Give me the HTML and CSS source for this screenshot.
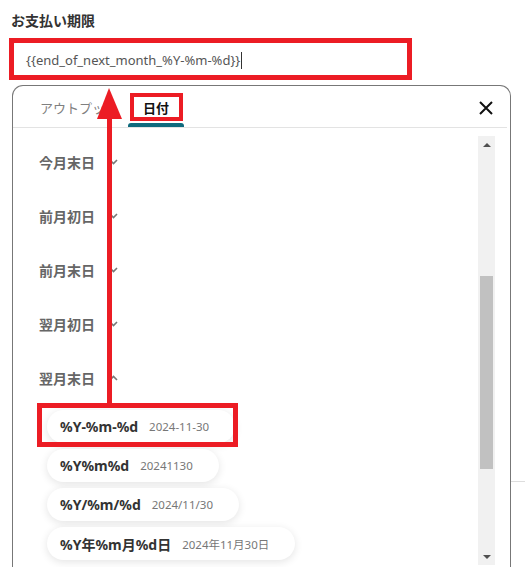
FILE: index.html
```html
<!DOCTYPE html>
<html lang="ja">
  <head>
    <meta charset="UTF-8" />
    <meta name="viewport" content="width=device-width, initial-scale=1.0" />
    <title>お支払い期限</title>
    <link rel="stylesheet" href="styles.css">
  </head>
  <body>
    <div class="field-label">お支払い期限</div>
    <div class="field-input">{{end_of_next_month_%Y-%m-%d}}<span class="caret"></span></div>

    <div class="main">
      <div class="panel">
        <div class="tabs">
          <div class="tab">アウトプット</div>
          <div class="tab active">日付</div>
          <svg class="close" width="14" height="14" viewBox="0 0 14 14">
            <path d="M1 1 L13 13 M13 1 L1 13" stroke="#111" stroke-width="2" fill="none" />
          </svg>
        </div>

        <div class="body">
          <div class="list">
            <div class="group">今月末日
              <svg class="chev" width="9" height="6" viewBox="0 0 9 6"><path d="M1 1 L4.5 4.5 L8 1" /></svg>
            </div>
            <div class="group">前月初日
              <svg class="chev" width="9" height="6" viewBox="0 0 9 6"><path d="M1 1 L4.5 4.5 L8 1" /></svg>
            </div>
            <div class="group">前月末日
              <svg class="chev" width="9" height="6" viewBox="0 0 9 6"><path d="M1 1 L4.5 4.5 L8 1" /></svg>
            </div>
            <div class="group">翌月初日
              <svg class="chev" width="9" height="6" viewBox="0 0 9 6"><path d="M1 1 L4.5 4.5 L8 1" /></svg>
            </div>
            <div class="group">翌月末日
              <svg class="chev" width="9" height="6" viewBox="0 0 9 6"><path d="M1 5 L4.5 1.5 L8 5" /></svg>
            </div>

            <div class="chips">
              <div class="chip"><b>%Y-%m-%d</b><span>2024-11-30</span></div>
              <div class="chip"><b>%Y%m%d</b><span>20241130</span></div>
              <div class="chip"><b>%Y/%m/%d</b><span>2024/11/30</span></div>
              <div class="chip"><b>%Y年%m月%d日</b><span>2024年11月30日</span></div>
            </div>
          </div>

          <div class="scrollbar">
            <div class="sb-btn"><i class="arrow-up"></i></div>
            <div class="sb-thumb"></div>
            <div class="sb-space"></div>
            <div class="sb-btn"><i class="arrow-down"></i></div>
          </div>
        </div>
      </div>
      <div class="aside"></div>
    </div>

    <!-- annotations -->
    <div class="mark mark-input"></div>
    <div class="mark mark-tab"></div>
    <div class="mark mark-chip"></div>
    <svg class="pointer" width="30" height="320" viewBox="0 0 30 320">
      <rect x="10" y="28" width="5" height="288" fill="#ec1c24" />
      <polygon points="12,0 0,31 25,31" fill="#ec1c24" />
    </svg>
  </body>
</html>
```

FILE: styles.css
```css
body {
  margin: 0;
  width: 525px;
  height: 567px;
  overflow: hidden;
  background: #fff;
  font-family: "Noto Sans", "Noto Sans CJK JP", sans-serif;
  color: #333;
  position: relative;
}
.field-label {
  padding: 11px 0 0 11px;
  font-size: 14px;
  font-weight: bold;
  line-height: 20px;
  color: #333;
}
.field-input {
  margin: 10px 0 0 13px;
  width: 383px;
  height: 36px;
  padding-left: 12px;
  box-sizing: content-box;
  border: 1px solid #ccc;
  border-radius: 3px;
  display: flex;
  align-items: center;
  font-size: 13px;
  color: #555;
}
.caret {
  display: inline-block;
  width: 1px;
  height: 17px;
  background: #333;
  margin-left: 1px;
}

.main {
  display: flex;
  margin-top: 6px;
}
.panel {
  margin-left: 12px;
  width: 497px;
  height: 500px;
  border: 1px solid #777;
  border-bottom: none;
  border-radius: 11px 11px 0 0;
  display: flex;
  flex-direction: column;
}
.aside {
  flex: 1;
  margin-top: 396px;
  height: 0;
  border-top: 1px solid #ddd;
}

.tabs {
  height: 42px;
  margin-right: 3px;
  padding: 2px 0 0 27px;
  box-sizing: border-box;
  border-bottom: 1px solid #e3e3e3;
  display: flex;
  align-items: center;
}
.tab {
  font-size: 13px;
  color: #808080;
  margin-right: 10px;
}
.tab.active {
  position: relative;
  height: 100%;
  padding: 0 15px;
  display: flex;
  align-items: center;
  color: #111;
  font-weight: bold;
}
.tab.active::after {
  content: "";
  position: absolute;
  left: 0;
  right: 0;
  bottom: 0;
  height: 4px;
  border-radius: 3px 3px 0 0;
  background: #0f6a7d;
}
.close {
  margin-left: auto;
  margin-right: 14px;
}

.body {
  flex: 1;
  display: flex;
}
.list {
  flex: 1;
  padding-top: 7px;
}
.group {
  height: 54px;
  padding-left: 26px;
  display: flex;
  align-items: center;
  gap: 14px;
  font-size: 14px;
  font-weight: bold;
  color: #666;
}
.chev path {
  fill: none;
  stroke: #777;
  stroke-width: 1.6;
}
.chips {
  margin-top: 5px;
  padding-left: 34px;
  display: flex;
  flex-direction: column;
  align-items: flex-start;
  gap: 6px;
}
.chip {
  height: 33px;
  padding: 0 26px 0 13px;
  border-radius: 17px;
  background: #fff;
  box-shadow: 0 2px 8px rgba(0, 0, 0, 0.11);
  display: flex;
  align-items: center;
  gap: 11px;
}
.chip b {
  font-size: 14px;
  color: #333;
}
.chip span {
  font-size: 11.5px;
  color: #777;
}

.scrollbar {
  width: 17px;
  height: 429px;
  margin: 8px 15px 0 0;
  background: #f1f1f1;
  display: flex;
  flex-direction: column;
}
.sb-btn {
  height: 17px;
  display: flex;
  align-items: center;
  justify-content: center;
}
.arrow-up {
  border-left: 4px solid transparent;
  border-right: 4px solid transparent;
  border-bottom: 4px solid #505050;
}
.arrow-down {
  border-left: 4px solid transparent;
  border-right: 4px solid transparent;
  border-top: 4px solid #505050;
}
.sb-thumb {
  margin: 123px 2px 0;
  height: 193px;
  background: #c1c1c1;
}
.sb-space {
  flex: 1;
}

.mark {
  position: absolute;
  border: 5px solid #ec1c24;
  box-sizing: border-box;
}
.mark-input {
  left: 9px;
  top: 38px;
  width: 403px;
  height: 42px;
}
.mark-tab {
  left: 130px;
  top: 93px;
  width: 53px;
  height: 28px;
  border-width: 4px;
}
.mark-chip {
  left: 37px;
  top: 403px;
  width: 201px;
  height: 44px;
}
.pointer {
  position: absolute;
  left: 97px;
  top: 88px;
}
```
